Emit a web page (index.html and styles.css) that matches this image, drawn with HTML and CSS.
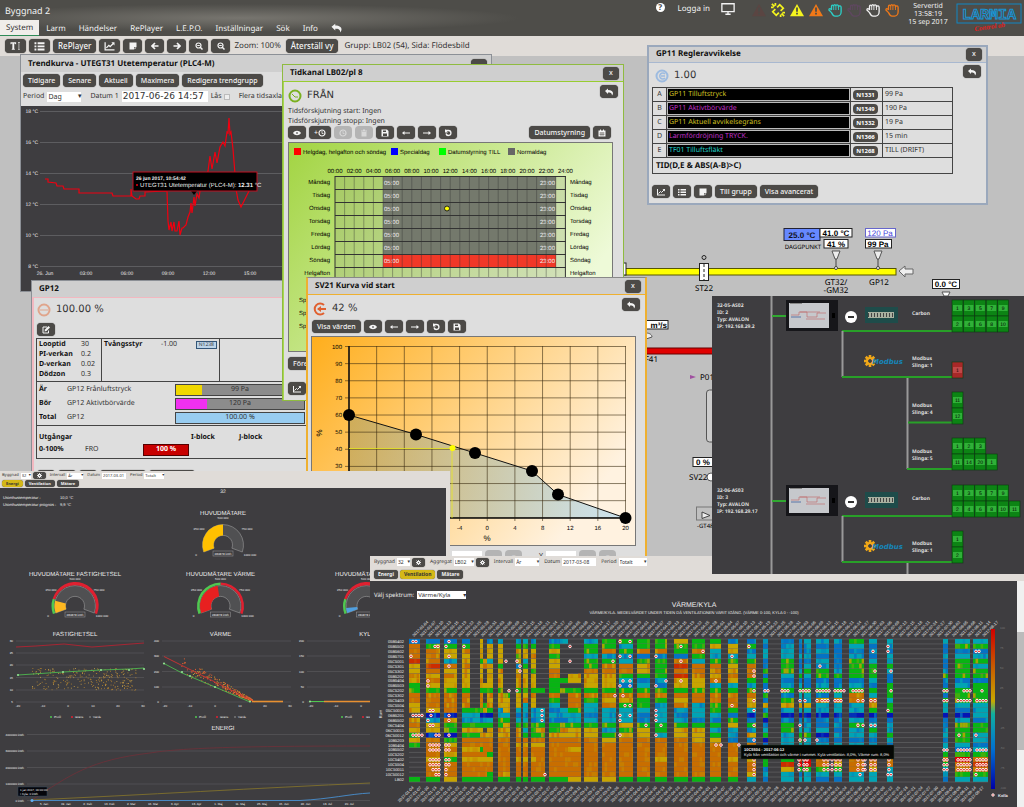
FILE: index.html
```html
<!DOCTYPE html>
<html lang="sv">
<head>
  <meta charset="utf-8">
  <title>Byggnad 2</title>
  <link rel="stylesheet" href="styles.css">
</head>
<body>
  <!-- icon set -->
  <svg class="defs" width="0" height="0">
    <symbol id="i-text" viewBox="0 0 16 16"><path d="M0 2h9v3H8L7 4H6v8l1 1v1H2v-1l1-1V4H2L1 5H0zM12 2h3v1h-1v10h1v1h-3v-1h1V3h-1z"/></symbol>
    <symbol id="i-list" viewBox="0 0 16 16"><path d="M0 2h3v3H0zM5 2h11v3H5zM0 7h3v3H0zM5 7h11v3H5zM0 12h3v3H0zM5 12h11v3H5z"/></symbol>
    <symbol id="i-chart" viewBox="0 0 16 16"><path d="M0 2h2v11h14v2H0z"/><path d="M3 11l4-4 2 2 5-5" fill="none" stroke="currentColor" stroke-width="2"/><path d="M11 2h5v5z"/></symbol>
    <symbol id="i-note" viewBox="0 0 16 16"><path d="M1 1h14v9h-5v5H1zM11 11h4l-4 4z"/></symbol>
    <symbol id="i-left" viewBox="0 0 16 16"><path d="M8 2L2 8l6 6M2 8h13" fill="none" stroke="currentColor" stroke-width="3.4"/></symbol>
    <symbol id="i-right" viewBox="0 0 16 16"><path d="M8 2l6 6-6 6M14 8H1" fill="none" stroke="currentColor" stroke-width="3.4"/></symbol>
    <symbol id="i-tleft" viewBox="0 0 16 16"><path d="M0 8l5-4v3h11v2H5v3z"/></symbol>
    <symbol id="i-tright" viewBox="0 0 16 16"><path d="M16 8l-5-4v3H0v2h11v3z"/></symbol>
    <symbol id="i-zoom" viewBox="0 0 16 16"><path d="M10 10l5 5" stroke="currentColor" stroke-width="3"/><circle cx="7" cy="7" r="5" fill="none" stroke="currentColor" stroke-width="2.4"/><path d="M4.500 6h5v2h-5z"/></symbol>
    <symbol id="i-reply" viewBox="0 0 16 16"><path d="M0 6l6-5v3c7 0 10 3 10 6 0 2-1 4-2 5 0-5-3-6-8-6v3z"/></symbol>
    <symbol id="i-eye" viewBox="0 0 16 16"><path d="M0 8c4-6 12-6 16 0-4 6-12 6-16 0z"/><circle cx="8" cy="8" r="2" fill="#777"/></symbol>
    <symbol id="i-clock" viewBox="0 0 16 16"><circle cx="8" cy="8" r="6" fill="none" stroke="currentColor" stroke-width="2.400"/><path d="M8 4v5h3" fill="none" stroke="currentColor" stroke-width="1.600"/></symbol>
    <symbol id="i-trash" viewBox="0 0 16 16"><path d="M2 3h12v2H2zM6 1h4v2H6zM3 6h10v9H3z"/></symbol>
    <symbol id="i-save" viewBox="0 0 16 16"><path d="M1 1h11l3 3v11H1zM4 3v3h6V3zM4 9v5h8V9z" fill-rule="evenodd"/></symbol>
    <symbol id="i-undo" viewBox="0 0 16 16"><path d="M3 3h6a5 5 0 1 1-5 6" fill="none" stroke="currentColor" stroke-width="2.600"/><path d="M2 0v7h6z"/></symbol>
    <symbol id="i-cal" viewBox="0 0 16 16"><path d="M1 3h3V1h2v2h4V1h2v2h3v12H1z"/><path d="M3 8h10M3 11h10M6 6v8M10 6v8" stroke="#4c4a47"/></symbol>
    <symbol id="i-edit" viewBox="0 0 16 16"><path d="M10 2H2v12h11V9" fill="none" stroke="currentColor" stroke-width="2"/><path d="M5 11l1-4 7-7 3 3-7 7z"/></symbol>
    <symbol id="i-gear" viewBox="0 0 16 16"><circle cx="8" cy="8" r="4" fill="none" stroke="currentColor" stroke-width="4"/><path d="M8 0v3M8 13v3M0 8h3M13 8h3M2 2l3 3M11 11l3 3M14 2l-3 3M2 14l3-3" stroke="currentColor" stroke-width="3"/></symbol>
    <symbol id="i-screen" viewBox="0 0 16 16"><path d="M1 2h14v9H1zM5 14h6M8 11v3" fill="none" stroke="currentColor" stroke-width="1.500"/></symbol>
    <symbol id="i-warn" viewBox="0 0 16 16"><path d="M8 1l8 14H0z"/><path d="M7 5h2v5H7zM7 11h2v2H7z" fill="#4c4a47"/></symbol>
    <symbol id="i-unlink" viewBox="0 0 16 16"><path d="M7 5l3-3 4 4-3 3M9 11l-3 3-4-4 3-3M1 1l3 3M5 0v3M0 5h3M15 15l-3-3M11 16v-3M16 11h-3" fill="none" stroke="currentColor" stroke-width="2"/></symbol>
    <symbol id="i-hand" viewBox="0 0 16 16"><path d="M4 11L1 8c0-2 2-2 3 0V4c0-2 2-2 2.500 0 0-3 2.500-3 2.500 0 0-3 3-2 3 0 1-1 3-1 3 1v5c0 3-2 5-4 5H8c-2 0-3-2-4-4z" fill="none" stroke="currentColor" stroke-width="1.500"/><path d="M6.500 4v4M9 4v4M12 4v4" stroke="currentColor"/></symbol>
  </svg>

  <header class="top">
    <div class="top-left">
      <h1>Byggnad 2</h1>
      <nav class="menu">
        <a class="active" href="#">System</a>
        <a href="#">Larm</a>
        <a href="#">Händelser</a>
        <a href="#">RePlayer</a>
        <a href="#">L.E.P.O.</a>
        <a href="#">Inställningar</a>
        <a href="#">Sök</a>
        <a href="#">Info</a>
        <a href="#" aria-label="Tillbaka"><svg class="ic ic-l"><use href="#i-reply"/></svg></a>
      </nav>
    </div>
    <div class="top-right">
      <span class="help">?</span>
      <a class="login" href="#">Logga in</a>
      <svg class="ic ic-xl screen"><use href="#i-screen"/></svg>
      <div class="alarms">
        <svg class="ic ic-xl dimred"><use href="#i-warn"/></svg>
        <svg class="ic ic-xl yellow"><use href="#i-unlink"/></svg>
        <svg class="ic ic-xl yellow"><use href="#i-warn"/></svg>
        <svg class="ic ic-xl orange"><use href="#i-warn"/></svg>
        <svg class="ic ic-xl cyan"><use href="#i-hand"/></svg>
        <svg class="ic ic-xl dimpurple"><use href="#i-hand"/></svg>
        <svg class="ic ic-xl"><use href="#i-hand"/></svg>
        <svg class="ic ic-xl orange"><use href="#i-hand"/></svg>
      </div>
      <div class="clock">Servertid<br>13:58:19<br>15 sep 2017</div>
      <svg class="logo" viewBox="0 0 68 32">
        <rect x="1" y="1" width="64" height="19" fill="none" stroke="#1187c4"/>
        <text x="33" y="16" class="logo-a">LARMIA</text>
        <text x="34" y="26" class="logo-b" transform="rotate(-8 34 26)">Control ab</text>
      </svg>
    </div>
  </header>

  <div class="toolbar">
    <button class="btn" aria-label="Text"><svg class="ic ic-l"><use href="#i-text"/></svg></button>
    <button class="btn" aria-label="Lista"><svg class="ic ic-l"><use href="#i-list"/></svg></button>
    <button class="btn">RePlayer</button>
    <button class="btn" aria-label="Trend"><svg class="ic ic-l"><use href="#i-chart"/></svg></button>
    <button class="btn" aria-label="Anteckning"><svg class="ic"><use href="#i-note"/></svg></button>
    <button class="btn" aria-label="Föregående"><svg class="ic"><use href="#i-left"/></svg></button>
    <button class="btn" aria-label="Nästa"><svg class="ic"><use href="#i-right"/></svg></button>
    <button class="btn" aria-label="Zooma ut"><svg class="ic"><use href="#i-zoom"/></svg></button>
    <button class="btn" aria-label="Zooma in"><svg class="ic"><use href="#i-zoom"/></svg></button>
    <span class="zoom">Zoom: 100%</span>
    <button class="btn">Återställ vy</button>
    <span class="group">Grupp: LB02 (54), Sida: Flödesbild</span>
  </div>

  <main>
    <!-- air flow picture behind the windows -->
    <svg class="flow" viewBox="623 205 401 352">
      <rect x="625" y="268.500" width="271" height="6.500" fill="#ffff00" stroke="#555500"/>
      <rect x="623" y="263" width="3" height="12" fill="#fff" stroke="#222"/>
      <rect x="699.500" y="263.500" width="9" height="17" fill="#fff" stroke="#222"/>
      <path d="M704 264v17" stroke="#222" stroke-dasharray="3 2"/><circle cx="704" cy="257.500" r="2" fill="none" stroke="#222"/>
      <text x="704" y="291" class="ft mid">ST22</text>
      <rect x="784" y="228.500" width="36" height="12" fill="#6688ff" stroke="#223"/><text x="802" y="238" class="fv mid navy">25.0 °C</text>
      <text x="803" y="249" class="fs mid">DAGGPUNKT</text>
      <rect x="820" y="228.500" width="32" height="8.500" fill="#fff" stroke="#222"/><text x="836" y="236" class="fv mid">41.0 °C</text>
      <rect x="824" y="239.500" width="24" height="8.500" fill="#fff" stroke="#222"/><text x="836" y="247" class="fv mid">41 %</text>
      <rect x="865.500" y="228.500" width="30" height="8.500" fill="#fff" stroke="#66c"/><text x="880" y="236" class="fb mid">120 Pa</text>
      <rect x="865.500" y="239.500" width="26" height="8.500" fill="#fff" stroke="#222"/><text x="878" y="247" class="fv mid">99 Pa</text>
      <path d="M832 251h8l-3 8h-2zM874 251h8l-3 8h-2z" fill="#eee" stroke="#555"/><path d="M836 259v8M878 259v8" stroke="#444"/>
      <circle cx="836" cy="268" r="1.500" fill="#fff" stroke="#444"/><circle cx="878" cy="268" r="1.500" fill="#fff" stroke="#444"/>
      <path d="M899 271l6-5v3h8v5h-8v3z" fill="#eee" stroke="#666"/>
      <text x="836" y="285" class="ft mid">GT32/</text><text x="836" y="293" class="ft mid">-GM32</text><text x="879" y="285" class="ft mid">GP12</text>
      <rect x="932.500" y="279.500" width="27" height="9" fill="#fff" stroke="#222"/><text x="946" y="287" class="fv mid">0.0 °C</text>
      <path d="M942 292h8l-2 4h-4z" fill="#fff" stroke="#555"/>
      <rect x="640" y="320.500" width="28" height="8.500" fill="#fff" stroke="#222"/><text x="667" y="328" class="fv end">m³/s</text>
      <path d="M646 333c4 0 6 2 6 4l-6 2z" fill="#eee" stroke="#555"/>
      <rect x="640" y="348" width="80" height="6" fill="#e00000" stroke="#600"/>
      <text x="658" y="362" class="ft end">F41</text>
      <path d="M690 375l6 2-6 2z" fill="#a050a0"/><text x="700" y="380" class="ft">P01</text>
      <rect x="706.500" y="390" width="20" height="52" rx="3" fill="#ccc" stroke="#555"/>
      <rect x="693" y="457.500" width="30" height="9" fill="#fff" stroke="#222"/><text x="696" y="465" class="fv">0 %</text>
      <text x="689" y="480" class="ft">SV22</text><circle cx="711" cy="477" r="4" fill="#fff" stroke="#555"/>
      <rect x="696.500" y="507" width="22" height="13" fill="none" stroke="#777"/><path d="M702 512l8 3.500-8 3z" fill="#eee" stroke="#444"/>
      <text x="697" y="528" class="fs">-GT48</text>
    </svg>

    <section class="win trend">
      <div class="win-title"><h2>Trendkurva - UTEGT31 Utetemperatur (PLC4-M)</h2><button class="btn close">x</button></div>
      <div class="row">
        <button class="btn">Tidigare</button>
        <button class="btn">Senare</button>
        <button class="btn">Aktuell</button>
        <button class="btn">Maximera</button>
        <button class="btn">Redigera trendgrupp</button>
      </div>
      <div class="row period">
        <label for="tperiod">Period</label>
        <span class="sel w34"><select id="tperiod"><option>Dag</option></select></span>
        <label for="tdate" class="gap">Datum 1</label>
        <input id="tdate" class="date" type="text" value="2017-06-26 14:57">
        <label class="check">Lås <input type="checkbox"></label>
        <span class="gap">Flera tidsaxlar</span>
      </div>
      <svg id="trend" class="plot dark" viewBox="21 107 470 185">
        <path d="M40 112.500H490M40 143.500H490M40 174.500H490M40 205.500H490M40 236.500H490M40 267.500H490" stroke="#6c6c6e" stroke-width=".7"/>
        <g class="t5 end white"><text x="38" y="114">18 °C</text><text x="38" y="145">16 °C</text><text x="38" y="176">14 °C</text><text x="38" y="207">12 °C</text><text x="38" y="238">10 °C</text><text x="38" y="269">8 °C</text></g>
        <g class="t5 mid white"><text x="45" y="276">26. Jun</text><text x="86" y="276">03:00</text><text x="127" y="276">06:00</text><text x="168" y="276">09:00</text><text x="209" y="276">12:00</text><text x="250" y="276">15:00</text></g>
        <polyline fill="none" stroke="#f00010" stroke-width="1.200" points="45,180 48,180 48,183 56,184 57,187 63,187 64,190 79,190 79,194 112,194 113,197 131,197 131,190 132,197 136,200 139,200 140,197 145,197 145,193 167,192 168,222 169,231 171,223 172,232 174,223 175,232 177,232 179,222 180,236 182,229 183,229 186,226 188,218 190,213 191,204 192,214 194,198 195,207 197,195 199,199 201,185 205,180 208,172 210,157 212,170 215,153 217,164 220,148 223,143 225,147 227,133 228,134 229,119 230,135 231,133 233,150 235,175 236,190 238,201 241,208 245,200 250,190"/>
        <path d="M191 192h6l-3 4z"/><rect x="133" y="173" width="124" height="19" stroke="#c01020"/>
        <text x="136" y="181" class="t5 white bold">26 jun 2017, 10:54:42</text>
        <circle cx="137" cy="186" r="1" fill="#f00010"/><text x="140" y="188" class="t6 white">UTEGT31 Utetemperatur (PLC4-M): <tspan class="bold">12.31</tspan> °C</text>
      </svg>
    </section>

    <section class="win gp12">
      <div class="win-title"><h2>GP12</h2></div>
      <div class="value"><svg class="badge" viewBox="0 0 14 14"><circle cx="7" cy="7" r="5.500" fill="none" stroke="#e0a58c" stroke-width="2"/><path d="M3 7h8" stroke="#e0a58c"/></svg><span>100.00 %</span></div>
      <div class="row"><button class="btn" aria-label="Ändra"><svg class="ic"><use href="#i-edit"/></svg></button></div>
      <div class="reg">
        <div class="reg-top">
          <dl><dt>Looptid</dt><dd>30</dd><dt>PI-verkan</dt><dd>0.2</dd><dt>D-verkan</dt><dd>0.02</dd><dt>Dödzon</dt><dd>0.3</dd></dl>
          <div class="force"><b>Tvångsstyr</b><span>-1.00</span><a href="#">N1238</a></div>
        </div>
        <div class="reg-bars">
          <b>Är</b><span>GP12 Frånluftstryck</span><div class="bar"><i class="y" style="width:20%"></i><em>99 Pa</em></div>
          <b>Bör</b><span>GP12 Aktivtbörvärde</span><div class="bar"><i class="m" style="width:24%"></i><em>120 Pa</em></div>
          <b>Total</b><span>GP12</span><div class="bar"><i class="b" style="width:100%"></i><em>100.00 %</em></div>
        </div>
        <div class="reg-out">
          <b>Utgångar</b><span></span><span></span><b>I-block</b><b>J-block</b>
          <b>0-100%</b><span>FRO</span><strong>100 %</strong>
        </div>
      </div>
      <div class="row rest">
        <button class="btn" aria-label="Trend"><svg class="ic"><use href="#i-chart"/></svg></button>
        <button class="btn" aria-label="Lista"><svg class="ic"><use href="#i-list"/></svg></button>
        <button class="btn" aria-label="Anteckning"><svg class="ic"><use href="#i-note"/></svg></button>
        <button class="btn wide" aria-label="Till grupp"></button>
        <button class="btn wide" aria-label="Visa avancerat"></button>
      </div>
    </section>

    <section class="win tidkanal">
      <div class="win-title"><h2>Tidkanal LB02/pl 8</h2><button class="btn close">x</button></div>
      <div class="value"><svg class="badge" viewBox="0 0 14 14"><circle cx="7" cy="7" r="5.500" fill="none" stroke="#7ab020" stroke-width="2"/><path d="M4 5l3 3h3" fill="none" stroke="#7ab020"/></svg><span>FRÅN</span>
        <button class="btn back" aria-label="Tillbaka"><svg class="ic"><use href="#i-reply"/></svg></button></div>
      <p>Tidsförskjutning start: Ingen<br>Tidsförskjutning stopp: Ingen</p>
      <div class="row">
        <button class="btn" aria-label="Visa"><svg class="ic"><use href="#i-eye"/></svg></button>
        <button class="btn">+<svg class="ic"><use href="#i-clock"/></svg></button>
        <button class="btn" disabled aria-label="Tid"><svg class="ic"><use href="#i-clock"/></svg></button>
        <button class="btn" disabled aria-label="Ta bort"><svg class="ic"><use href="#i-trash"/></svg></button>
        <button class="btn" aria-label="Spara"><svg class="ic"><use href="#i-save"/></svg></button>
        <button class="btn" aria-label="Bakåt"><svg class="ic"><use href="#i-tleft"/></svg></button>
        <button class="btn" aria-label="Framåt"><svg class="ic"><use href="#i-tright"/></svg></button>
        <button class="btn" aria-label="Ångra"><svg class="ic"><use href="#i-undo"/></svg></button>
        <button class="btn push">Datumstyrning</button>
        <button class="btn" aria-label="Kalender"><svg class="ic"><use href="#i-cal"/></svg></button>
      </div>
      <svg id="week" class="plot" viewBox="288 142 323 208"></svg>
      <div class="row below"><button class="btn">Föregående</button></div>
      <div class="row below"><button class="btn" aria-label="Trend"><svg class="ic"><use href="#i-chart"/></svg></button></div>
    </section>

    <section class="win sv21">
      <div class="win-title"><h2>SV21 Kurva vid start</h2><button class="btn close">x</button></div>
      <div class="value"><svg class="badge" viewBox="0 0 14 14"><path d="M11 3a5.500 5.500 0 1 0 0 8M5 7h8" fill="none" stroke="#e06030" stroke-width="2"/><path d="M4 7l4-3v6z" fill="#e06030"/></svg><span>42 %</span>
        <button class="btn back" aria-label="Tillbaka"><svg class="ic"><use href="#i-reply"/></svg></button></div>
      <div class="row">
        <button class="btn">Visa värden</button>
        <button class="btn" aria-label="Visa"><svg class="ic"><use href="#i-eye"/></svg></button>
        <button class="btn" aria-label="Bakåt"><svg class="ic"><use href="#i-tleft"/></svg></button>
        <button class="btn" aria-label="Framåt"><svg class="ic"><use href="#i-tright"/></svg></button>
        <button class="btn" aria-label="Ångra"><svg class="ic"><use href="#i-undo"/></svg></button>
        <button class="btn" aria-label="Spara"><svg class="ic"><use href="#i-save"/></svg></button>
      </div>
      <svg id="curve" class="plot" viewBox="312 336 323 208"></svg>
      <div class="row xy">
        <label for="px">X</label><input id="px" type="text"><button class="btn" disabled aria-label="Öka X">▴</button><button class="btn" disabled aria-label="Minska X">▾</button>
        <label for="py">Y</label><input id="py" type="text"><button class="btn" disabled aria-label="Öka Y">▴</button><button class="btn" disabled aria-label="Minska Y">▾</button>
      </div>
    </section>

    <section class="win gp11">
      <div class="win-title"><h2>GP11 Regleravvikelse</h2><button class="btn close">x</button></div>
      <div class="value"><svg class="badge" viewBox="0 0 14 14"><circle cx="7" cy="7" r="5.500" fill="none" stroke="#9dbbe0" stroke-width="2"/><path d="M10 5a3 3 0 1 0 0 4M6 7h4" fill="none" stroke="#9dbbe0" stroke-width="1.500"/></svg><span>1.00</span>
        <button class="btn back" aria-label="Tillbaka"><svg class="ic"><use href="#i-reply"/></svg></button></div>
      <table>
        <tr><td>A</td><td class="name c-y">GP11 Tilluftstryck</td><td><button class="tag">N1331</button></td><td>99 Pa</td></tr>
        <tr><td>B</td><td class="name c-m">GP11 Aktivtbörvärde</td><td><button class="tag">N1349</button></td><td>190 Pa</td></tr>
        <tr><td>C</td><td class="name c-y">GP11 Aktuell avvikelsegräns</td><td><button class="tag">N1332</button></td><td>19 Pa</td></tr>
        <tr><td>D</td><td class="name c-m">Larmfördröjning TRYCK.</td><td><button class="tag">N1366</button></td><td>15 min</td></tr>
        <tr><td>E</td><td class="name c-c">TF01 Tilluftsfläkt</td><td><button class="tag">N1268</button></td><td>TILL (DRIFT)</td></tr>
        <tr><th colspan="4">TID(D,E &amp; ABS(A-B)&gt;C)</th></tr>
      </table>
      <div class="row">
        <button class="btn" aria-label="Trend"><svg class="ic"><use href="#i-chart"/></svg></button>
        <button class="btn" aria-label="Lista"><svg class="ic"><use href="#i-list"/></svg></button>
        <button class="btn" aria-label="Anteckning"><svg class="ic"><use href="#i-note"/></svg></button>
        <button class="btn">Till grupp</button>
        <button class="btn">Visa avancerat</button>
      </div>
    </section>

    <section class="pane energy">
      <div class="filters tiny">
        <div class="frow">
          <label for="e1">Byggnad</label><span class="sel w10"><select id="e1"><option>32</option></select></span>
          <button class="btn" aria-label="Välj"><svg class="ic ic-s"><use href="#i-gear"/></svg></button>
          <label for="e2">Intervall</label><span class="sel w16"><select id="e2"><option>År</option></select></span>
          <label for="e3">Datum</label><input id="e3" type="text" value="2017-03-01">
          <label for="e4">Period</label><span class="sel w20"><select id="e4"><option>Totalt</option></select></span>
        </div>
        <div class="frow"><button class="btn sel-tab">Energi</button><button class="btn">Ventilation</button><button class="btn">Mätare</button></div>
      </div>
      <svg id="energy" class="plot dark" viewBox="0 488 446 319"></svg>
    </section>

    <section class="pane vent">
      <div class="filters">
        <div class="frow">
          <label for="v1">Byggnad</label><span class="sel w13"><select id="v1"><option>32</option></select></span>
          <button class="btn" aria-label="Välj byggnad"><svg class="ic ic-s"><use href="#i-gear"/></svg></button>
          <label for="v2">Aggregat</label><span class="sel w20"><select id="v2"><option>LB02</option></select></span>
          <button class="btn" aria-label="Välj aggregat"><svg class="ic ic-s"><use href="#i-gear"/></svg></button>
          <label for="v3">Intervall</label><span class="sel w24"><select id="v3"><option>År</option></select></span>
          <label for="v4">Datum</label><input id="v4" type="text" value="2017-03-08">
          <label for="v5">Period</label><span class="sel w28"><select id="v5"><option>Totalt</option></select></span>
        </div>
        <div class="frow"><button class="btn">Energi</button><button class="btn sel-tab">Ventilation</button><button class="btn">Mätare</button></div>
      </div>
      <div class="vent-body">
        <div class="vent-main">
          <div class="spectrum"><label for="spec">Välj spektrum:</label><span class="sel"><select id="spec"><option>Värme/Kyla</option></select></span></div>
          <svg id="heat" class="plot" viewBox="370 600 647 207"></svg>
        </div>
        <div class="scroll"><i></i></div>
      </div>
    </section>

    <svg id="net" class="net" viewBox="712 296 312 278"></svg>
  </main>
  <script src="script.js"></script>
</body>
</html>
```

FILE: styles.css
```css
*{
  box-sizing: border-box;
}

body{
  margin: 0;
  position: relative;
  min-height: 100vh;
  overflow: hidden;
  background: linear-gradient(#c0c0c0 556px, #e0dcd8 556px);
  font: 7px/10px "Noto Sans", "Open Sans", sans-serif;
  text-rendering: geometricPrecision;
  color: #333;
}

h1, h2, p, dl, dd{
  margin: 0;
}
a{
  color: inherit;
  text-decoration: none;
}
button, input, select{
  font: inherit;
  color: inherit;
  margin: 0;
}
.defs{
  position: absolute;
}

/* icons */
.ic{
  width: 8px;
  height: 8px;
  fill: currentColor;
  display: block;
}
.ic-s{ width: 5px; height: 5px; }
.ic-l{ width: 11px; height: 10px; }
.ic-xl{ width: 14px; height: 14px; }
.yellow{ color: #f4f41e; }
.orange{ color: #f07818; }
.cyan{ color: #2cd0c8; }
.dimred{ color: #663f3c; opacity: .5; }
.dimpurple{ color: #6b4470; opacity: .6; }

.btn{
  display: inline-flex;
  align-items: center;
  justify-content: center;
  height: 13px;
  padding: 0 5px;
  border: 0;
  border-radius: 4px;
  background: #4c4a47;
  color: #f4f4f4;
  font-weight: 500;
  white-space: nowrap;
  box-shadow: 0 0 1px #333;
}
.btn:disabled{
  background: #b4b4b4;
  color: #d8d8d8;
  box-shadow: none;
}

/* header */
.top{
  display: flex;
  justify-content: space-between;
  height: 36px;
  background: radial-gradient(ellipse 280px 14px at 240px 18px, #77756f, transparent), #4e4d49;
  color: #f2f2f2;
}
.top h1{
  height: 20px;
  padding: 4px 5px 0;
  font: 9px/14px "Noto Sans", sans-serif;
}
.menu{
  display: flex;
  gap: 1px;
  font-size: 8px;
  line-height: 15px;
}
.menu a{
  padding: 0 6px;
  height: 16px;
  display: flex;
  align-items: center;
}
.menu .active{
  background: #f0eeea;
  color: #333;
  border-bottom: 1px solid #2e8b57;
}
.top-right{
  display: flex;
  align-items: flex-start;
  padding: 3px 0 0;
}
.help{
  width: 9px;
  height: 9px;
  border-radius: 50%;
  background: #fff;
  color: #444;
  font: bold 8px/9px "Noto Sans", sans-serif;
  text-align: center;
}
.login{
  margin: 1px 11px 0 13px;
  font-size: 8px;
}
.alarms{
  display: flex;
  gap: 5px;
  margin: 0 7px 0 17px;
}
.screen{
  margin-top: -1px;
}
.clock{
  width: 44px;
  margin-right: 6px;
  line-height: 8px;
  text-align: center;
}
.logo{
  width: 68px;
  height: 32px;
}
.logo-a{
  font: bold 15px "Liberation Mono", monospace;
  fill: #4e4d49;
  stroke: #1795d6;
  text-anchor: middle;
}
.logo-b{
  font: italic bold 7px "Liberation Serif", serif;
  fill: #e02020;
  text-anchor: middle;
}

.toolbar{
  display: flex;
  align-items: center;
  gap: 3px;
  height: 20px;
  padding: 0 5px;
  background: #e0dcd8;
  font-size: 8px;
}
.toolbar .btn{
  height: 14px;
  min-width: 19px;
}
.toolbar .group{
  margin-left: 3px;
}
.toolbar .zoom{
  margin: 0 2px 0 1px;
}

/* floating windows */
.win{
  position: absolute;
  background: #dedede;
  border: 1px solid #8c9096;
  overflow: hidden;
}
.win-title{
  display: flex;
  align-items: center;
  justify-content: space-between;
  height: 17px;
  padding: 0 4px 0 7px;
  background: #cfcfcf;
}
.win-title h2{
  font-size: 8px;
  line-height: 12px;
  color: #111;
}
.close{
  width: 16px;
}
.row{
  display: flex;
  align-items: center;
  gap: 3px;
}
.value{
  display: flex;
  align-items: center;
  gap: 5px;
  font: 10px/16px "DejaVu Sans", sans-serif;
}
.badge{
  width: 14px;
  height: 14px;
}
.back{
  margin-left: auto;
  align-self: flex-start;
}
.win .btn:not(.close){
  min-width: 17px;
}
.plot{
  display: block;
  width: 100%;
}
.dark{
  background: #3e3d40;
}

.trend{
  left: 20px;
  top: 54px;
  width: 472px;
}
.trend .row{
  padding: 2px 2px 0;
}
.trend .period{
  height: 19px;
  padding-top: 0;
}
.trend .date{
  width: 86px;
  font: 9px/11px "DejaVu Sans", sans-serif;
}
.trend .close{
  margin-top: 4px;
}
.gap{
  margin-left: 6px;
}
.check{
  display: flex;
  align-items: center;
  gap: 2px;
}
.check input{
  appearance: none;
  width: 6px;
  height: 6px;
  border: 1px solid #bbb;
  background: #eee;
}
input[type=text]{
  height: 11px;
  padding: 0 1px;
  border: 0;
  background: #fff;
}

.sel{
  display: inline-grid;
  align-items: center;
  background: #fff;
}
.sel select{
  grid-area: 1/1;
  appearance: none;
  width: 100%;
  border: 0;
  padding: 0 1px;
  background: none;
}
.sel::after{
  content: "▾";
  grid-area: 1/1;
  justify-self: end;
  pointer-events: none;
}
.w10{ width: 10px; }
.w13{ width: 13px; }
.w16{ width: 16px; }
.w20{ width: 20px; }
.w24{ width: 24px; }
.w28{ width: 28px; }
.w34{ width: 34px; }

.gp12{
  left: 31px;
  top: 280px;
  width: 300px;
  height: 191px;
  border-bottom: 0;
  box-shadow: inset 2px 0 #f2b8c0;
}
.gp12 .win-title{
  border-bottom: 1px solid #f2b8c0;
}
.gp12 .value{
  height: 24px;
  padding: 0 5px;
}
.gp12 .row{
  padding: 1px 5px 2px;
}
.reg{
  margin-left: 4px;
  border: 1px solid #444;
}
.reg b{
  color: #111;
}
.reg-top{
  display: flex;
  height: 43px;
  border-bottom: 1px solid #444;
}
.reg-top dl{
  display: grid;
  grid-template-columns: 42px 20px;
  width: 65px;
  padding: 1px 2px;
  border-right: 1px solid #444;
}
.reg dt{
  font-weight: bold;
  color: #111;
}
.force{
  display: flex;
  align-items: flex-start;
  justify-content: space-between;
  width: 118px;
  padding: 1px 2px;
  border-right: 1px solid #444;
}
.force a{
  margin-top: 1px;
  padding: 0 2px;
  border: 1px solid #357;
  background: #bcd4e8;
  font-size: 5px;
  line-height: 6px;
}
.reg-bars{
  display: grid;
  grid-template-columns: 28px 108px 130px;
  grid-auto-rows: 14px;
  align-items: center;
  height: 44px;
  padding: 1px 2px;
  border-bottom: 1px solid #444;
}
.bar{
  display: grid;
  height: 12px;
  border: 1px solid #444;
  background: #8c8c8c;
}
.bar i, .bar em{
  grid-area: 1/1;
  font-style: normal;
  text-align: center;
}
.bar .y{ background: #f0d800; }
.bar .m{ background: #f030f0; }
.bar .b{ background: #98ccf0; }
.reg-out{
  display: grid;
  grid-template-columns: 46px 58px 48px 48px 60px;
  grid-auto-rows: 12px;
  align-items: center;
  padding: 6px 2px 2px;
}
.reg-out strong{
  width: 46px;
  background: #c80000;
  border: 1px solid #500;
  color: #fff;
  text-align: center;
}
.gp12 .rest{
  padding-top: 11px;
}
.gp12 .wide{
  width: 46px;
}

.tidkanal{
  left: 282px;
  top: 64px;
  width: 342px;
  height: 337px;
  border-color: #8fbb40;
  box-shadow: inset 1px 0 #a8d850;
}
.tidkanal .win-title{
  border-bottom: 1px solid #98cc30;
}
.tidkanal .value, .sv21 .value{
  height: 25px;
  padding: 3px 5px 0;
}
.tidkanal p{
  padding: 0 5px;
  height: 19px;
}
.tidkanal .row{
  padding: 0 12px 3px 5px;
}
.tidkanal .below{
  padding: 5px 5px 7px;
}
.push{
  margin-left: auto;
}
.tidkanal .plot, .sv21 .plot{
  width: 325px;
  margin-left: 5px;
  border: 1px solid #777;
}

.sv21{
  left: 306px;
  top: 277px;
  width: 341px;
  height: 280px;
  border: 2px solid #eeb030;
  border-top: 1px solid #888;
  border-bottom: 0;
}
.sv21 .win-title{
  border-bottom: 1px solid #eeb030;
}
.sv21 .row{
  padding: 0 4px 3px;
}
.sv21 .plot{
  margin-left: 3px;
}
.sv21 .xy{
  padding: 4px 0 0 137px;
}
.xy input{
  width: 30px;
}
.xy label:nth-of-type(2){
  margin-left: 14px;
}

.gp11{
  left: 647px;
  top: 45px;
  width: 341px;
  height: 160px;
  border: 2px solid #9aa8bc;
}
.gp11 .win-title{
  border-bottom: 1px solid #a8b8d0;
}
.gp11 .value{
  height: 25px;
  padding: 3px 5px 0 6px;
}
.gp11 .win-title, .gp11 .value{
  margin-top: -1px;
}
.gp11 table{
  width: 301px;
  margin: 0 0 11px 3px;
  border-collapse: collapse;
}
.gp11 td{
  height: 14px;
  padding: 0 2px;
  border: 1px solid #444;
  line-height: 8px;
}
.gp11 td:first-child{
  width: 14px;
  text-align: center;
}
.gp11 td:nth-child(3){
  width: 32px;
}
.gp11 td:last-child{
  width: 70px;
}
.gp11 .name{
  background: #000;
  box-shadow: inset 0 0 0 1px #bbb;
}
.c-y{ color: #d0c020; }
.c-m{ color: #c030c8; }
.c-c{ color: #20d0c8; }
.tag{
  display: block;
  width: 25px;
  height: 10px;
  padding: 0;
  border: 0;
  border-radius: 4px;
  background: #4c4a47;
  color: #fff;
  font-size: 6px;
  line-height: 10px;
  font-weight: bold;
}
.gp11 th{
  height: 16px;
  padding: 0 3px;
  border: 1px solid #444;
  text-align: left;
  font-size: 8px;
  color: #111;
}
.gp11 .row{
  padding: 0 3px;
}

/* dashboards */
.pane{
  position: absolute;
  background: #3e3d40;
  overflow: hidden;
}
.filters{
  background: #e0dcd8;
  font-size: 5px;
  line-height: 8px;
  padding: 2px 4px;
}
.frow{
  display: flex;
  align-items: center;
  gap: 2px;
  height: 8px;
  margin-bottom: 4px;
}
.frow .btn{
  height: 9px;
  padding: 0 4px;
  border-radius: 3px;
  font-weight: bold;
}
.frow .btn + label, .frow .sel + label, .frow input + label{
  margin-left: 3px;
}
.frow input[type=text]{
  width: 34px;
  height: 8px;
}
.frow .sel-tab{
  background: #d4b818;
  color: #333;
}
.energy{
  left: 0;
  top: 471px;
  width: 450px;
  bottom: 0;
  border-right: 4px solid #e0dcd8;
}
.tiny{
  font-size: 4px;
  line-height: 6px;
  height: 17px;
  padding: 1px 2px;
}
.tiny .frow{
  height: 7px;
  margin-bottom: 1px;
}
.tiny .frow .btn{
  height: 7px;
}
.tiny .frow .btn + label, .tiny .frow .sel + label, .tiny .frow input + label{
  margin-left: 2px;
}
.tiny .frow input[type=text]{
  width: 24px;
  height: 6px;
}

.vent{
  left: 370px;
  right: 0;
  top: 556px;
  bottom: 0;
}
.vent .filters{
  height: 25px;
}
.vent-body{
  display: flex;
  height: 100%;
}
.vent-main{
  flex: 1;
}
.spectrum{
  display: flex;
  align-items: center;
  gap: 3px;
  height: 19px;
  padding: 8px 4px 0;
  font-size: 6px;
  line-height: 8px;
  color: #eee;
}
.spectrum .sel{
  width: 49px;
  color: #333;
}
.scroll{
  width: 7px;
  padding-top: 51px;
  background: #f0f0f0;
}
.scroll i{
  display: block;
  height: 118px;
  background: #bbb;
}

.flow{
  position: absolute;
  left: 623px;
  top: 205px;
  width: 401px;
  height: 352px;
}
.net{
  position: absolute;
  left: 712px;
  top: 296px;
  width: 312px;
  height: 278px;
  background: #3e3d40;
}

/* svg text */
svg text{
  font-family: "Liberation Sans", sans-serif;
}
.mid{ text-anchor: middle; }
.end{ text-anchor: end; }
.white{ fill: #eee; }
.bold{ font-weight: bold; }
.ft{ font-size: 8px; }
svg .ft, svg .fs, svg .n5{ font-family: "Noto Sans", sans-serif; }
.fs{ font-size: 6px; }
.fv{ font-size: 8px; font-weight: bold; }
.fb{ font-size: 8px; fill: #4444dd; }
.navy{ fill: #112; }
.t3{ font-size: 3px; }
.t4{ font-size: 4px; }
.t5{ font-size: 5px; }
.t6{ font-size: 6px; }
.t7{ font-size: 7px; }
.t8{ font-size: 8px; }
.n5{ font-size: 5px; font-weight: bold; fill: #ddd; }
svg .modbus{ font: italic bold 7px "DejaVu Sans", sans-serif; fill: #1684b8; }
```

FILE: script.js
```js
function rect(x, y, w, h, fill, extra){
  return '<rect x="'+x+'" y="'+y+'" width="'+w+'" height="'+h+'" fill="'+fill+'" '+(extra||'')+'/>';
}
function text(x, y, s, cls, extra){
  return '<text x="'+x+'" y="'+y+'" class="'+cls+'" '+(extra||'')+'>'+s+'</text>';
}
function path(d, stroke, w, extra){
  return '<path d="'+d+'" fill="none" stroke="'+stroke+'" stroke-width="'+(w||1)+'" '+(extra||'')+'/>';
}
function put(id, s){
  document.getElementById(id).innerHTML = s;
}
// repeatable random numbers
let seed = 7;
function rnd(){
  seed = (seed * 16807) % 2147483647;
  return seed / 2147483647;
}

// week schedule
function drawWeek(){
  let s = '<defs><linearGradient id="gg" x1="0" y1="0" x2="1" y2=".5"><stop offset="0" stop-color="#a2d442"/><stop offset="1" stop-color="#eefad8"/></linearGradient></defs>';
  s += rect(288, 142, 323, 208, 'url(#gg)');
  [[293,'red','Helgdag, helgafton och söndag'],[390,'blue','Specialdag'],[438,'#0f0','Datumstyrning TILL'],[507,'#666','Normaldag']].forEach(function(l){
    s += rect(l[0], 147, 7, 7, l[1]) + text(l[0]+9, 153, l[2], 't6');
  });
  for(let i = 0; i <= 12; i++) s += text(334+i*19.2, 172, String(i*2).padStart(2,'0')+':00', 't6 mid');
  const days = ['Måndag','Tisdag','Onsdag','Torsdag','Fredag','Lördag','Söndag','Helgafton'];
  days.forEach(function(d, i){
    const y = 175 + i*13;
    s += rect(334, y, 231, 13, '#8a9a78', 'opacity=".25"');
    if(i < 7) s += rect(382, y, 173, 13, i == 6 ? '#f03828' : '#74796c');
    s += path('M334 '+y+'.5H565', '#333') + text(329, y+8, d, 't6 end') + text(569, y+8, d, 't6');
    if(i < 7) s += text(383, y+9, '05:00', 't6 white') + text(554, y+9, '23:00', 't6 end white');
  });
  for(let i = 0; i < 3; i++) s += text(298, 301+i*13, 'Specialdag '+(i+1), 't6');
  for(let i = 0; i <= 24; i++) s += path('M'+(334+i*9.6)+' 175V279', '#333', i%24 ? .4 : 1);
  s += '<circle cx="446" cy="207.500" r="2.500" fill="#ff0" stroke="#222"/>';
  put('week', s);
}

// start curve
function drawCurve(){
  let s = '<defs><linearGradient id="og" x1="0" y1="0" x2="1" y2=".5"><stop offset="0" stop-color="#ffae1c"/><stop offset="1" stop-color="#fff2e0"/></linearGradient><linearGradient id="af"><stop offset="0" stop-color="#b0a060" stop-opacity=".6"/><stop offset="1" stop-color="#c0e0f4" stop-opacity=".8"/></linearGradient></defs>';
  s += rect(312, 336, 323, 208, 'url(#og)');
  const pts = [[349,414],[416,433.5],[475,452],[532,470],[558,493.5],[625.5,517]];
  s += '<path d="M349 517L'+pts.join(' ')+'z" fill="url(#af)"/>';
  for(let i = 0; i <= 10; i++){
    const x = 349 + i*27.65, y = 345.5 + i*17.13;
    s += path('M'+x+' 345V520M345 '+y+'H626', '#3a2c10', .6);
    s += text(342, y+2, 100-i*10, 't6 end') + text(x, 529, -20+i*4, 't6 mid');
  }
  s += path('M349 345V517H626', '#111', 1.5);
  s += path('M349 447.500H452V517', '#e8e820', .8);
  s += '<polyline fill="none" stroke="#111" points="'+pts.join(' ')+'"/>';
  pts.forEach(function(p){ s += '<circle cx="'+p[0]+'" cy="'+p[1]+'" r="6"/>'; });
  s += '<circle cx="452.500" cy="447" r="3" fill="#ff0"/>';
  s += text(487, 540, '%', 't8 mid') + text(322, 432, '%', 't8 mid', 'transform="rotate(-90 322 432)"');
  put('curve', s);
}

// controller tree
function drawNet(){
  let s = path('M771.500 296V574', '#999', 2);
  function head(y, lines){
    lines.forEach(function(l, i){ s += text(717, y+i*7, l, 'n5'); });
  }
  function unit(y){
    s += path('M772 '+(y+16)+'H787', '#30a830', 2);
    s += rect(786, y, 52, 31, '#16161a') + rect(789, y+3, 40, 25, '#c6c8cc');
    s += path('M791 '+(y+15)+'h8v-3h8v5h10v-4h9M800 '+(y+12)+'h20M806 '+(y+19)+'h19', '#c07070', .7) + path('M791 '+(y+17)+'h10', '#4060a0', .8);
    s += rect(832, y+13, 3, 5, '#000') + rect(790, y+3, 12, 1, '#888');
    s += '<circle cx="851" cy="'+(y+17)+'" r="6" fill="#fff"/>' + rect(848, y+16, 6, 2, '#333');
    s += rect(865, y+7, 33, 16, '#1e4c4a') + rect(868, y+12, 26, 6, '#a8b0a0');
    s += path('M868 '+(y+15)+'h26', '#444', 4, 'stroke-dasharray="1 2"');
    s += text(912, y+15, 'Carbon', 'n5');
    s += path('M842 '+(y+31)+'H954', '#28a028', 2);
    s += path('M842.500 '+(y+31)+'v46', '#999', 2) + path('M842 '+(y+77)+'H954', '#28a028', 2);
    for(let a = 0; a < 8; a++) s += rect(868.7, y+55, 2.6, 4, '#f0a818', 'transform="rotate('+a*45+' 870 '+(y+61)+')"');
    s += '<circle cx="870" cy="'+(y+61)+'" r="3" fill="none" stroke="#f0a818" stroke-width="2"/>';
    s += text(872, y+64, 'Modbus', 'modbus');
    s += text(912, y+60, 'Modbus', 'n5') + text(912, y+67, 'Slinga: 1', 'n5');
  }
  function mods(y, row, color){
    row.forEach(function(n, i){
      const x = 952 + i*11.4;
      s += rect(x, y, 11, 16, color || '#0c8414', 'stroke="#0a3a10" stroke-width=".6"') + rect(x+1, y+5, 9, 6, color ? '#c04848' : '#30b038');
      s += text(x+5.5, y+10, n, 't5 mid');
    });
  }
  head(307, ['32-05-AS02','ID: 2','Typ: AVALON','IP: 192.168.29.2']);
  head(492, ['32-06-AS03','ID: 3','Typ: AVALON','IP: 192.168.29.17']);
  unit(300); unit(485);
  s += path('M907.500 378V469', '#999', 2) + path('M907.500 563V574', '#999', 2);
  s += path('M908 422.500H952M907 469H952', '#28a028', 2);
  s += text(912,407,'Modbus','n5')+text(912,414,'Slinga: 4','n5')+text(912,453,'Modbus','n5')+text(912,460,'Slinga: 5','n5');
  mods(300, [1,3,5,7,9]); mods(316, [2,4,6,8,10]);
  mods(362, [1], '#a82828');
  mods(392, [11]); mods(408, [12]);
  mods(438, [1,2,3]); mods(454, [11,14,20,1]);
  mods(485, [1,3,5,7,9]); mods(501, [2,4,6,8,10,11]);
  mods(531, [1]); mods(547, [2]);
  put('net', s);
}

// energy dashboard
function ring(cx, cy, r0, r1, a0, a1, fill){
  function p(r, a){ a = a*Math.PI/180; return (cx+r*Math.sin(a)).toFixed(1)+' '+(cy-r*Math.cos(a)).toFixed(1); }
  const big = a1-a0 > 180 ? 1 : 0;
  return '<path d="M'+p(r1,a0)+'A'+r1+' '+r1+' 0 '+big+' 1 '+p(r1,a1)+'L'+p(r0,a1)+'A'+r0+' '+r0+' 0 '+big+' 0 '+p(r0,a0)+'z" fill="'+fill+'"'+(fill=='#505052' ? ' stroke="#aaa" stroke-width=".5"' : '')+'/>';
}
function gauge(cx, cy, name, val, color, limit){
  let s = ring(cx, cy, 9.5, 20.5, -110, 110, '#505052') + ring(cx, cy, 9.5, 20.5, -110, val, color);
  if(limit !== undefined) s += ring(cx, cy, 21, 23.5, limit, 110, '#e02030') + ring(cx, cy, 21, 23.5, -110, limit, '#50c850');
  s += text(cx, cy-30, name, 't6 mid white');
  s += rect(cx-10, cy+6, 20, 5, '#3e3d40', 'stroke="#999" stroke-width=".5"') + text(cx, cy+10, '280878 kWh', 't3 mid white');
  s += text(cx, cy-26, '500 000', 't3 mid white') + text(cx-24, cy-15, '250 000', 't3 mid white') + text(cx+24, cy-15, '750 000', 't3 mid white');
  s += text(cx-27, cy+11, '0', 't3 mid white') + text(cx+27, cy+11, '1000 000', 't3 mid white');
  return s;
}
function grid(x0, x1, ys, labels){
  let s = '';
  ys.forEach(function(y, i){
    s += path('M'+x0+' '+y+'H'+x1, '#5c5c5e', .6) + text(x0-3, y+1, labels[i], 't3 end white');
  });
  return s;
}
function legend(x){
  return '<circle cx="'+x+'" cy="717" r="1" fill="#50c850"/><circle cx="'+(x+21)+'" cy="717" r="1" fill="#e02030"/><circle cx="'+(x+39)+'" cy="717" r="1" fill="#777"/>' +
    text(x+3, 718, 'Profil', 't3 white') + text(x+24, 718, 'Gräns', 't3 white') + text(x+42, 718, 'Värde', 't3 white');
}
function drawEnergy(){
  let s = text(223, 493, '32', 't5 mid white');
  s += text(3, 499, 'Utomhustemperatur :', 't4 white') + text(60, 499, '10,0 °C', 't4 white');
  s += text(3, 506, 'Utomhustemperatur prognos :', 't4 white') + text(60, 506, '9,9 °C', 't4 white');
  s += gauge(223, 545, 'HUVUDMÄTARE', 0, '#ffc000');
  s += gauge(75, 606, 'HUVUDMÄTARE FASTIGHETSEL', -75, '#ffb820', -72);
  s += gauge(220.5, 606, 'HUVUDMÄTARE VÄRME', -8, '#e82020', 0);
  s += gauge(366.5, 606, 'HUVUDMÄTARE KYLA', -96, '#50a0e0', -72);
  s += text(75, 635.5, 'FASTIGHETSEL', 't6 mid white') + text(220.5, 635.5, 'VÄRME', 't6 mid white') + text(367, 635.5, 'KYLA', 't6 mid white');
  s += grid(16, 144, [641,653,665,677.5,690,702], [30,25,20,15,10,5]);
  s += grid(162, 291, [641,656,671.5,687,702], [400,300,200,100,0]);
  s += grid(307, 446, [641,656,671.5,687,702], [200,150,100,50,0]);
  for(let i = 0; i < 6; i++){
    s += text(18+i*25, 707, -20+i*10, 't3 mid white') + text(165+i*25, 707, -20+i*10, 't3 mid white') + text(311+i*25, 707, -20+i*10, 't3 mid white');
  }
  s += legend(51) + legend(196) + legend(342);
  for(let i = 0; i < 260; i++){
    s += rect((32+rnd()*104).toFixed(1), (668+rnd()*22-(i%9==0?2:0)).toFixed(1), .9, .9, i%3 ? '#b08030' : '#c8a048');
  }
  for(let i = 0; i < 230; i++){
    const t = Math.sqrt(rnd());
    s += rect((178+t*74).toFixed(1), (664+t*36+(rnd()-.5)*18*(1.1-t)).toFixed(1), 1, 1, i%3 ? '#e06030' : '#d0a030');
  }
  s += path('M16 647l20-1 28-2 28 3 26-2 26-2', '#c02030', .8) + path('M18 675l45-3 38-2 28-1 15-1', '#50c850', .8);
  s += path('M164 656.500L255 702', '#d03030', .9) + path('M164 663.500L182 673 215 687 250 702', '#50c850', .8) + path('M252 701.500H283', '#e89030', 1.6) + path('M324 701.500H370', '#e89030', 1.6) + path('M310 701.500H324', '#50c850', 1);
  [[18,675],[63,672],[101,670],[129,670],[144,669],[164,663.5],[182,672],[190,676],[215,687],[250,701.5],[310,701.5]].forEach(function(p){
    s += '<circle cx="'+p[0]+'" cy="'+p[1]+'" r="1.100" fill="#90e090"/>';
  });
  s += text(223, 729.5, 'ENERGI', 't6 mid white');
  s += grid(27, 446, [734.5,751,767.5,784,800.5], ['4000000 kWh','3000000 kWh','2000000 kWh','1000000 kWh','0 kWh']);
  s += path('M32 800C70 775 90 760 150 753 180 748 240 746 370 746', '#703038', .8);
  s += path('M32 800C140 795 260 788 370 783', '#80702c', .9) + path('M32 800.500H300C330 799 350 794 370 793', '#4890d0', .9);
  ['5. Jan','19. Jan','2. Feb','16. Feb','2. Mar','16. Mar','6. Apr','13. Apr','1. Maj','11. Maj','25. Maj','15. Jun','22. Jun','13. Jul','20. Jul'].forEach(function(d, i){
    s += text(44+i*21.8, 805, d, 't3 mid white');
  });
  s += rect(18, 787, 29, 9, '#05050a', 'stroke="#30485c" stroke-width=".5"') + text(20, 791, '1 jan 2017, 00:00:00', 't3 white') + text(20, 795, '• Kyla: 0 kWh', 't3 white');
  s += '<circle cx="32" cy="800.500" r="1.500" fill="#60b0f0"/>';
  put('energy', s);
}

// heat map, one string of 29 rows for each run of days
const colors = { r:'#cc2c00', o:'#c86e00', y:'#c8a400', g:'#08b414', t:'#00a4b4', b:'#0472c4', n:'#0414b4', x:'#dc0000' };
const runs = [
  [409,420,'boooryyyyggooyy.yoygyg......g'], [426,440,'bgoooroyoygoooyntyynooooyooog'], [444,457,'bgyytoyoyygoooonyggngyoygoooy'],
  [462,470,'bgoyyoyyyygooogttgygooyoyooog'], [470,480,'..............gttgygooyoyooog'], [480,483,'yyyygyyyyygyoognbgyyoogoyooog'], [483,487,'....yo...yg..gynbg.yooooyooog'], [487,493,'byyytyyyyygoyogntgyyooogyoogg'],
  [498,503,'tyyyygoyyygoyyttggyyoooooooog'], [503,510,'...........gyyytgyyyoooooooyg'], [516,521,'bgygytyoyygyyytbtgyyoyooyooog'], [523,528,'tgyytgyyyygyottbtgtgoyooyooog'], [531,536,'bgyoyygyyygoyybtbgggoyooyooog'], [536,545,'..........g...tttgygoyoooooog'],
  [549,560,'bgygyyoogggogtbtbggyoooooooog'], [560,568,'t.......g.g...ttbgoyoooooooog'], [568,581,'.......yy.gooogttgyyooyoooooy'], [584,598,'tggtggoyyygogttbtgyyooooooooy'], [602,616,'ggotgooyyygoyotttgtgyoooooooy'], [619,633,'gtgbtoogtbgoygtttygyoooooooog'],
  [637,650,'ggobgyygbtgoggtbbgyyoooooooog'], [655,667,'ggobggggtbgogttttggtooooyooog'], [674,688,'yggbororyygoyotbtgyyoooooooog'], [692,705,'ggogtoooyygootttbgyyyooooooog'],
  [710,721,'gyttgooyotgooggtbgtgyooooooog'], [728,738,'byytgyyoytgooogbgyttboooyooog'], [747,756,'bgbtgooogtgoyytnbgtyboogyooyt'], [763,768,'tbttbbgbgbbgbytgnbtgnbttggbtb'],
  [781,794,'btttgggtbtgbgytnbggtttgtgrytt'], [799,802,'tbbtbbtgbtgttytnbttggttorxgbt'], [804,811,'ttbtbtgtbbgttytnbttgttgtxxgtt'], [816,829,'tbtbttggbtgbyttnbbtnbttgoogtb'], [834,842,'tbbbbbtgbbgtyttnbtbtbttgoygtb'],
  [849,864,'gtbtggggbtgoottntgttbttgooott'], [869,877,'tbtbtgggtbgtoygnbtgtbttgooytt'], [887,893,'ttbttgtbbgggtggnbttgtbtgoottt'], [943,948,'tbbtbbtgbbgbgttnbbttbttgogttb'], [955,970,'tgbtggggbtgggtbntggggtbgxoogt'], [973,988,'tgbtgtggbggggtttbggttbtgorogt']
];
const names = ['05B5402','05B5502','05B5602','05B5701','05C5001','05C5301','05C5302','05B5202','05B5404','05B5503','05C5202','05C5302','05C5403','05C5504','05C50011','06B5201','06B5502','06C5404','06C50011','06C50012','10B5203','10B5404','10B5502','10C5202','10C5402','10C5504','10C50011','10C50012','LB02'];
const late = [865,799,804,807,824,828,832,836,840,858,863,871,875,889,944,947,958,961,964,967,970,977,980,983,986];
const alarms = {
  0:[413,416,449,620,630], 1:[435,438,446,464,570,681,749,888], 2:[703,873,888,976,979], 3:[411,449,620,630,656,732], 4:[506,517,570,613,681], 5:[449,520,820],
  6:[520,754,875,891], 7:[754], 8:[428,623,630,666,681,716], 9:[428,620,630,656],
  10:[509,517,754,765,768,782,785,788,800,803,806,809,817,820,823,826,829,835,838,841,844,853,856,859,862,891,944,947,964,967,970,982],
  11:[615,623], 12:[754,800,805,817,822,825,828,835,838,841,858,863,871,875,944,947,958,961,964,967,970,977,980,983,986],
  13:[625,630,732], 14:[430,433,542,656,754,888], 15:[413,416,419,422,431,449,542,620,630,656], 16:[428,449,542,620,656], 17:[430,433,646,661,754,800,858,863,871,875],
  19:[413,416,419,422,436,439,449,620,656,959,976], 20:[754,800,805,817], 21:[430,433,436,439,446,449,716,721,739], 22:[430,433,436,439,446,449,944,947,958,961,964,967,970,977,980,983,986],
  24:[430,433,436,439,446,449,754].concat(late), 25:[430,433,436,439,446,449,754].concat(late), 26:[433,436,439,446,754].concat(late), 27:[436,439,446,545,754,860,888,891,976]
};
function drawHeat(){
  const rh = 4.93, near = { r:'o', o:'y', y:'o', g:'y', t:'b', b:'t', n:'b', x:'r' };
  let s = '<defs><linearGradient id="cb" x1="0" y1="0" x2="0" y2="1"><stop offset="0" stop-color="#d00000"/><stop offset=".25" stop-color="#c86000"/><stop offset=".45" stop-color="#c8a800"/><stop offset=".53" stop-color="#10b0a0"/><stop offset=".75" stop-color="#0070d0"/><stop offset="1" stop-color="#0000a8"/></linearGradient></defs>';
  s += text(694, 607, 'VÄRME/KYLA', 't7 mid white');
  s += text(694, 613.5, 'VÄRME/KYLA. MEDELVÄRDET UNDER TIDEN DÅ VENTILATIONEN VARIT IGÅNG. (VÄRME 0-100, KYLA 0 - -100)', 't4 mid white');
  names.forEach(function(n, i){
    const y = 639 + i*rh;
    s += path('M409 '+y+'H988', '#68686a', .6) + text(404, y+4, n, 't4 end white');
    runs.forEach(function(r){
      const c = r[2][i];
      if(!c || c == '.') return;
      s += rect(r[0], y, r[1]-r[0], rh+.1, colors[c], 'shape-rendering="crispEdges"');
      for(let x = r[0]; x < r[1]-1; x += 2.53){
        if(i < 28 && rnd() < .25) s += rect(x, y, Math.min(2.6, r[1]-x), rh+.1, colors[near[c]], i > 19 || rnd() < .6 ? 'opacity=".3"' : 'opacity=".8"');
      }
    });
  });
  s += path('M409 782H988', '#68686a', .6);
  // every third day
  for(let i = 0; i < 76; i++){
    const d = new Date(Date.UTC(2017, 0, 4+i*3)).toISOString().slice(0, 10), x = 414 + i*7.6;
    s += text(0, 0, d, 't4 white', 'transform="translate('+x+' 637) rotate(-45)"');
    s += text(0, 0, d, 't4 end white', 'transform="translate('+x+' 788) rotate(-45)"');
  }
  for(const row in alarms) alarms[row].forEach(function(x){
    s += '<circle cx="'+x+'" cy="'+(641.5+row*rh)+'" r="1.300" fill="#e02020" stroke="#fff" stroke-width=".9"/>';
  });
  s += text(382, 714, 'Rum', 't4 mid white', 'transform="rotate(-90 382 714)"');
  s += rect(741, 745, 153, 14, '#050805', 'stroke="#304030" stroke-width=".5"');
  s += text(744, 751, '10C5504 - 2017-06-12', 't4 white bold') + text(744, 756, 'Kyla från ventilation och värme i rummet. Kyla ventilation: 8,0%, Värme rum: 8,0%', 't4 white');
  s += rect(991, 629, 4, 160, 'url(#cb)');
  for(let i = 0; i < 9; i++) s += text(1000, 629+i*20, 100-i*25, 't3', 'fill="#777"');
  s += '<circle cx="993" cy="795" r="1.200" fill="#e02020" stroke="#fff"/>' + text(998, 796.5, 'Kolla', 't4 white bold');
  put('heat', s);
}

drawWeek();
drawCurve();
drawNet();
drawEnergy();
drawHeat();
```
